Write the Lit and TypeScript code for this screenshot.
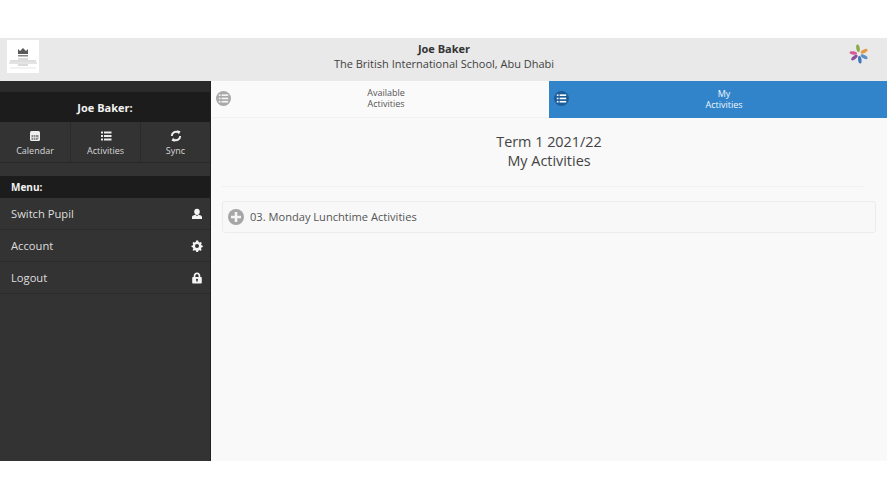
import { LitElement, html, css, svg } from "lit";
import { customElement } from "lit/decorators.js";

const listIcon = svg`<rect x="3" y="3.600" width="1.800" height="1.700"/><rect x="6" y="3.600" width="7" height="1.700"/><rect x="3" y="7.100" width="1.800" height="1.700"/><rect x="6" y="7.100" width="7" height="1.700"/><rect x="3" y="10.600" width="1.800" height="1.700"/><rect x="6" y="10.600" width="7" height="1.700"/>`;

const petals: [string, number][] = [
  ["#8aa94a", -10],
  ["#e39a45", 62],
  ["#5d8fc2", 118],
  ["#3f78b8", 172],
  ["#8c4f9f", 232],
  ["#d65a9a", 280],
];

@customElement("app-root")
export class AppRoot extends LitElement {
  static styles = css`
    :host { display: block; width: 887px; height: 499px; background: #fff; font-family: "Open Sans", "Liberation Sans", sans-serif; overflow: hidden; }
    .page { display: flex; flex-direction: column; height: 499px; padding: 38px 0; box-sizing: border-box; }
    .header { height: 43px; flex: none; background: #e9e9e9; display: flex; align-items: flex-start; padding: 2px 18px 0 7px; box-sizing: border-box; }
    .school-logo { width: 32px; height: 33px; background: #fff; flex: none; }
    .school-logo svg, .flower svg { display: block; }
    .title { flex: 1; text-align: center; color: #3f3f3f; font-size: 11px; line-height: 15px; padding-top: 1px; }
    .title b { display: block; font-weight: 700; color: #333; }
    .flower { flex: none; width: 20px; height: 22px; margin-top: 3px; }
    .body { flex: 1; display: flex; min-height: 0; }
    .side { width: 211px; flex: none; background: #333; display: flex; flex-direction: column; border-right: 1px solid #222; box-sizing: border-box; }
    .strip-top { height: 11px; background: #2a2a2a; }
    .user { height: 30px; background: #1c1c1c; color: #f2f2f2; font-size: 11px; font-weight: 700; display: flex; align-items: center; justify-content: center; }
    .quick { height: 41px; display: grid; grid-template-columns: 71px 70px 69px; border-bottom: 1px solid #292929; box-sizing: border-box; }
    .quick div { display: flex; flex-direction: column; align-items: center; padding-top: 8px; box-sizing: border-box; color: #d8d8d8; font-size: 9px; line-height: 12px; gap: 3px; border-right: 1px solid #2b2b2b; }
    .quick div:last-child { border-right: 0; }
    .quick svg { width: 12px; height: 12px; display: block; }
    .gap { height: 13px; }
    .menu-h { height: 22px; background: #1c1c1c; color: #f2f2f2; font-size: 10px; font-weight: 700; display: flex; align-items: center; padding-left: 11px; }
    .item { height: 32px; display: flex; align-items: center; justify-content: space-between; padding: 0 7px 0 11px; color: #dedede; font-size: 11.200px; border-bottom: 1px solid #2b2b2b; box-sizing: border-box; }
    .item svg { width: 12px; height: 12px; fill: #f4f4f4; display: block; }
    .main { flex: 1; background: #f9f9f9; min-width: 0; display: flex; flex-direction: column; }
    .tabs { height: 37px; flex: none; display: grid; grid-template-columns: 338px 338px; }
    .tab { display: flex; align-items: center; padding: 0 0 2px 5px; font-size: 9px; line-height: 11px; text-align: center; border-bottom: 1px solid #f1f1f1; box-sizing: border-box; }
    .tab.off { color: #555; background: #fafafa; }
    .tab.on { color: #f1f6fb; background: #3184ca; border-bottom: 0; }
    .tab span { flex: 1; padding-right: 8px; }
    .tab .ic { width: 15px; height: 15px; border-radius: 50%; flex: none; display: block; }
    .tab.off .ic { background: #a9a9a9; fill: #f5f5f5; }
    .tab.on .ic { background: #1d5e9a; fill: #fff; }
    .head { margin: 14px 24px 0 11px; padding: 0 0 16px 13px; border-bottom: 1px solid #f1f1f1; text-align: center; color: #444; font-size: 14.400px; line-height: 19px; }
    .row { margin: 14px 11px 0 11px; height: 32px; border: 1px solid #ececec; border-radius: 3px; background: #f8f8f8; display: flex; align-items: center; padding: 0 0 1px 5px; gap: 6px; color: #555; font-size: 11.100px; box-sizing: border-box; }
    .row svg { width: 16px; height: 16px; display: block; flex: none; }
  `;

  render() {
    return html`<div class="page">
      <div class="header">
        <div class="school-logo">
          <svg width="32" height="33" viewBox="0 0 32 33">
            <path d="M11 9 l2 2 3-3 3 3 2-2 v5 h-10z" fill="#5a5a5a"/>
            <rect x="11" y="15" width="10" height="1.500" fill="#888"/>
            <rect x="11" y="18.500" width="10" height="1" fill="#bbb"/>
            <rect x="3" y="20.500" width="26" height="1" fill="#bdbdbd"/>
            <rect x="2" y="22.500" width="28" height="1" fill="#c9c9c9"/>
            <rect x="11" y="24.500" width="10" height="1" fill="#b5b5b5"/>
            <rect x="3" y="27.500" width="26" height="1" fill="#e6e6e6"/>
          </svg>
        </div>
        <div class="title"><b>Joe Baker</b>The British International School, Abu Dhabi</div>
        <div class="flower">
          <svg width="20" height="22" viewBox="-10 -11 20 22">
            ${petals.map(([c, a]) => svg`<ellipse cx="0" cy="-5.800" rx="1.700" ry="3.800" fill="${c}" transform="rotate(${a})"/>`)}
          </svg>
        </div>
      </div>
      <div class="body">
        <div class="side">
          <div class="strip-top"></div>
          <div class="user">Joe Baker:</div>
          <div class="quick">
            <div>
              <svg viewBox="0 0 12 12"><rect x="1" y="1" width="10" height="10" rx="1.500" fill="#eee"/><path d="M2.500 5h7v3.500L8 10H2.500z" fill="#8a8a8a"/><path d="M4.500 5v5M6.500 5v5M2.500 7.500h7" stroke="#eee" stroke-width=".6"/></svg>
              Calendar
            </div>
            <div>
              <svg viewBox="0 0 12 12" fill="#eee"><rect x="1" y="1.500" width="2" height="2"/><rect x="4" y="1.500" width="7.500" height="2"/><rect x="1" y="5" width="2" height="2"/><rect x="4" y="5" width="7.500" height="2"/><rect x="1" y="8.500" width="2" height="2"/><rect x="4" y="8.500" width="7.500" height="2"/></svg>
              Activities
            </div>
            <div>
              <svg viewBox="0 0 12 12"><path d="M1.800 6A4.200 4.200 0 0 1 8 2.300" fill="none" stroke="#eee" stroke-width="1.900"/><path d="M10.200 6A4.200 4.200 0 0 1 4 9.700" fill="none" stroke="#eee" stroke-width="1.900"/><path d="M6.800 .3 10.500 1.200 8.800 4.600z" fill="#eee"/><path d="M5.200 11.700 1.500 10.800 3.200 7.400z" fill="#eee"/></svg>
              Sync
            </div>
          </div>
          <div class="gap"></div>
          <div class="menu-h">Menu:</div>
          <div class="item">Switch Pupil<svg viewBox="0 0 12 12"><path d="M6 .8c1.800 0 2.800 1.300 2.800 3S7.800 7 6 7 3.200 5.500 3.200 3.800 4.200.8 6 .8zM4.300 6.800 6 8l1.700-1.200c1.800.5 3.300 1 3.300 2.200v2H1V9c0-1.200 1.500-1.700 3.300-2.200z"/></svg></div>
          <div class="item">Account<svg viewBox="0 0 12 12"><path fill-rule="evenodd" d="M6 .8l1.200.2.400 1.400 1 .5 1.300-.6.900 1-.7 1.300.3 1 1.400.6v1.300l-1.400.5-.4 1 .7 1.300-.9.900-1.300-.6-1 .4-.5 1.400H5.300l-.5-1.400-1-.4-1.300.6-.9-.9.700-1.300-.4-1L.5 7.500V6.200l1.400-.6.300-1-.7-1.300.9-1 1.300.6 1-.5.400-1.400zM6 4.300a2 2 0 1 0 0 4 2 2 0 0 0 0-4z" transform="translate(0 -.4)"/></svg></div>
          <div class="item">Logout<svg viewBox="0 0 12 12"><path fill-rule="evenodd" d="M6 .5c2 0 3.300 1.300 3.300 3.200V5h.7c.5 0 .8.300.8.800v5c0 .5-.3.700-.8.700H2c-.5 0-.8-.2-.8-.7v-5c0-.5.300-.8.800-.8h.7V3.700C2.700 1.800 4 .5 6 .5zM6 2.200c-1 0-1.600.6-1.600 1.600V5h3.200V3.800c0-1-.6-1.600-1.600-1.600zM6 6.800a1 1 0 0 0-.5 1.900v1.100h1V8.700A1 1 0 0 0 6 6.800z"/></svg></div>
        </div>
        <div class="main">
          <div class="tabs">
            <div class="tab off"><svg class="ic" viewBox="0 0 16 16">${listIcon}</svg><span>Available<br />Activities</span></div>
            <div class="tab on"><svg class="ic" viewBox="0 0 16 16">${listIcon}</svg><span>My<br />Activities</span></div>
          </div>
          <div class="head">Term 1 2021/22<br />My Activities</div>
          <div class="row">
            <svg viewBox="0 0 16 16"><circle cx="8" cy="8" r="8" fill="#a6a6a6"/><path d="M6.700 3h2.600v3.700H13v2.600H9.300V13H6.700V9.300H3V6.700h3.700z" fill="#f5f5f5"/></svg>
            03. Monday Lunchtime Activities
          </div>
        </div>
      </div>
    </div>`;
  }
}
